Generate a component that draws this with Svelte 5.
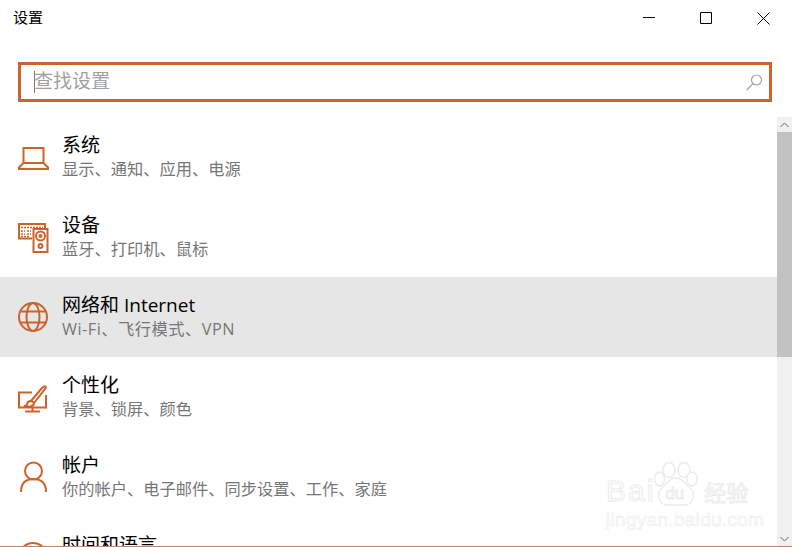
<script lang="ts">
  const items = [
    { title: '系统', sub: '显示、通知、应用、电源', icon: 'laptop' },
    { title: '设备', sub: '蓝牙、打印机、鼠标', icon: 'device' },
    { title: '网络和 Internet', sub: 'Wi-Fi、飞行模式、VPN', icon: 'globe', active: true },
    { title: '个性化', sub: '背景、锁屏、颜色', icon: 'brush' },
    { title: '帐户', sub: '你的帐户、电子邮件、同步设置、工作、家庭', icon: 'user' },
    { title: '时间和语言', sub: '语音、区域、日期', icon: 'clock' }
  ];
</script>

<div class="window">
  <header class="titlebar">
    <span class="title">设置</span>
    <div class="controls">
      <svg width="12" height="12" viewBox="0 0 12 12"><path d="M0 5.500h12" /></svg>
      <svg width="12" height="12" viewBox="0 0 12 12"><path d="M.5.5h11v11H.5z" /></svg>
      <svg width="13" height="13" viewBox="0 0 13 13"><path d="M.5.5l12 12M12.500.5l-12 12" /></svg>
    </div>
  </header>

  <div class="search">
    <span class="caret"></span>
    <span class="placeholder">查找设置</span>
    <svg class="glass" width="17" height="17" viewBox="0 0 17 17">
      <circle cx="10.500" cy="6" r="5" />
      <path d="M7 9.700L.7 16" />
    </svg>
  </div>

  <div class="body">
    <ul class="list">
      {#each items as item (item.title)}
        <li class="row" class:active={item.active}>
          <svg class="icon" width="32" height="32" viewBox="0 0 32 32">
            {#if item.icon === 'laptop'}
              <path d="M6.500 7h20v15h-20zM6.500 22L2 26.500V28h29v-1.500L26.500 22" />
            {:else if item.icon === 'device'}
              <path d="M15 17.500H2V3h26v4" />
              <path d="M16.500 8h14v23h-14z" />
              <circle cx="23.500" cy="15" r="4.500" />
              <circle cx="23.500" cy="15" r="1" />
              <circle cx="23.500" cy="25" r="2" />
              <path class="thin" d="M4 6.500h22M4 10h4M10 10h4M4 13h4M10 13h4M4 15.500h9" stroke-dasharray="2 1" />
            {:else if item.icon === 'globe'}
              <circle cx="16" cy="16" r="14" />
              <ellipse cx="16" cy="16" rx="6.500" ry="14" />
              <path d="M3.500 10.500h25M3.500 21.500h25" />
            {:else if item.icon === 'brush'}
              <path d="M15 11.500H2v15h27V14" />
              <path d="M15.500 26.500v3.500M8 30.500h15" />
              <path d="M14 20L25 7c1-1.200 3-2 3.500-1.500s0 2-1 3.200L17 22" />
              <path d="M14 20c-3 0-4 2-4 4-1 1-2 1-3 1 3 1.500 10 1 10-3z" />
            {:else if item.icon === 'user'}
              <circle cx="16.500" cy="10" r="8.500" />
              <path d="M4 31c0-8 4-13 12.500-13S29 23 29 31" />
            {:else}
              <circle cx="16" cy="16" r="14" />
              <path d="M16 8v8h6" />
            {/if}
          </svg>
          <div class="text">
            <span class="name">{item.title}</span>
            <span class="sub">{item.sub}</span>
          </div>
        </li>
      {/each}
    </ul>

    <div class="scrollbar">
      <div class="arrow">
        <svg width="9" height="6" viewBox="0 0 9 6"><path d="M.5 5L4.500 1l4 4" /></svg>
      </div>
      <div class="thumb"></div>
      <div class="track"></div>
      <div class="arrow">
        <svg width="9" height="6" viewBox="0 0 9 6"><path d="M.5 1l4 4 4-4" /></svg>
      </div>
    </div>
  </div>

  <div class="watermark">
    <svg class="paw" width="46" height="46" viewBox="0 0 46 46">
      <ellipse cx="15" cy="8" rx="6" ry="7.500" />
      <ellipse cx="30" cy="8" rx="6" ry="7.500" />
      <ellipse cx="5.500" cy="17" rx="5" ry="7" />
      <ellipse cx="38" cy="17" rx="5" ry="7" />
      <path d="M22 16c-7 0-8 5-13 9-7 5-5 18 5 18h16c10 0 12-13 5-18-5-4-6-9-13-9z" />
    </svg>
    <div class="wm-main"><span class="wm-bai">Bai</span><span class="wm-du">du</span><span class="wm-cn">经验</span></div>
    <div class="wm-url">jingyan.baidu.com</div>
  </div>
</div>

<style>
  :global(body) {
    margin: 0;
    background: #fff;
  }
  .window {
    position: relative;
    width: 792px;
    height: 547px;
    overflow: hidden;
    box-sizing: border-box;
    border-bottom: 1px solid #c8825c;
    background: #fff;
    display: flex;
    flex-direction: column;
    font-family: 'Open Sans', 'Noto Sans CJK SC', sans-serif;
  }
  .titlebar {
    height: 36px;
    flex: none;
    display: flex;
    align-items: center;
    justify-content: space-between;
    padding: 0 22px 0 13px;
  }
  .title {
    font-size: 15px;
    line-height: 20px;
    margin-top: -2px;
    color: #000;
  }
  .controls {
    display: flex;
    align-items: center;
    gap: 45px;
  }
  .controls svg {
    fill: none;
    stroke: #000;
    stroke-width: 1;
  }
  .search {
    flex: none;
    box-sizing: border-box;
    height: 40px;
    margin: 26px 20px 15px 18px;
    border: 3px solid #cc6329;
    display: flex;
    align-items: center;
    padding: 0 6px 0 13px;
  }
  .caret {
    width: 1px;
    height: 22px;
    background: #7a7a7a;
  }
  .placeholder {
    flex: 1;
    font-size: 19px;
    line-height: 24px;
    margin: -3px 0 0 -1px;
    color: #a0a0a0;
  }
  .glass {
    fill: none;
    stroke: #a5a5a5;
    stroke-width: 1.200;
  }
  .body {
    flex: 1;
    min-height: 0;
    display: flex;
  }
  .list {
    flex: 1;
    list-style: none;
    margin: 0;
    padding: 0;
    overflow: hidden;
  }
  .row {
    box-sizing: border-box;
    height: 80px;
    display: flex;
    align-items: center;
    gap: 13px;
    padding-left: 17px;
  }
  .row.active {
    background: #e6e6e6;
  }
  .row.active .sub {
    letter-spacing: 0.5px;
  }
  .icon {
    flex: none;
    fill: none;
    stroke: #cc6329;
    stroke-width: 2;
  }
  .thin {
    stroke-width: 1.500;
  }
  .text {
    display: flex;
    flex-direction: column;
    gap: 1px;
    padding-bottom: 1px;
  }
  .name {
    font-size: 19px;
    line-height: 24px;
    color: #000;
  }
  .sub {
    font-size: 16.250px;
    line-height: 22px;
    color: #767676;
  }
  .scrollbar {
    flex: none;
    width: 15px;
    background: #f0f0f0;
    display: flex;
    flex-direction: column;
  }
  .arrow {
    height: 15px;
    flex: none;
    display: flex;
    align-items: center;
    justify-content: center;
  }
  .arrow svg {
    fill: none;
    stroke: #666;
    stroke-width: 1;
  }
  .thumb {
    height: 225px;
    flex: none;
    background: #c2c2c2;
  }
  .track {
    flex: 1;
  }
  .watermark {
    position: absolute;
    left: 606px;
    top: 462px;
    width: 156px;
    height: 80px;
    pointer-events: none;
    color: #fff;
  }
  .paw {
    position: absolute;
    left: 48px;
    top: 0;
    fill: #fff;
    stroke: #ececec;
    stroke-width: 1.500;
  }
  .wm-main {
    position: absolute;
    left: 0;
    top: 12px;
    display: flex;
    align-items: center;
    white-space: nowrap;
    -webkit-text-stroke: 1px #ececec;
    font-family: 'Liberation Sans', sans-serif;
  }
  .wm-bai {
    font-size: 30px;
    letter-spacing: 2px;
  }
  .wm-du {
    width: 28px;
    margin: 6px 0 0 10px;
    font-size: 17px;
    position: relative;
    z-index: 1;
  }
  .wm-cn {
    font-family: 'Noto Sans CJK SC', sans-serif;
    font-size: 22px;
    margin-left: 11px;
  }
  .wm-url {
    position: absolute;
    left: 0;
    top: 47px;
    font-family: 'Liberation Sans', sans-serif;
    font-size: 19px;
    letter-spacing: 0.3px;
    white-space: nowrap;
    -webkit-text-stroke: 0.6px #ececec;
  }
</style>
